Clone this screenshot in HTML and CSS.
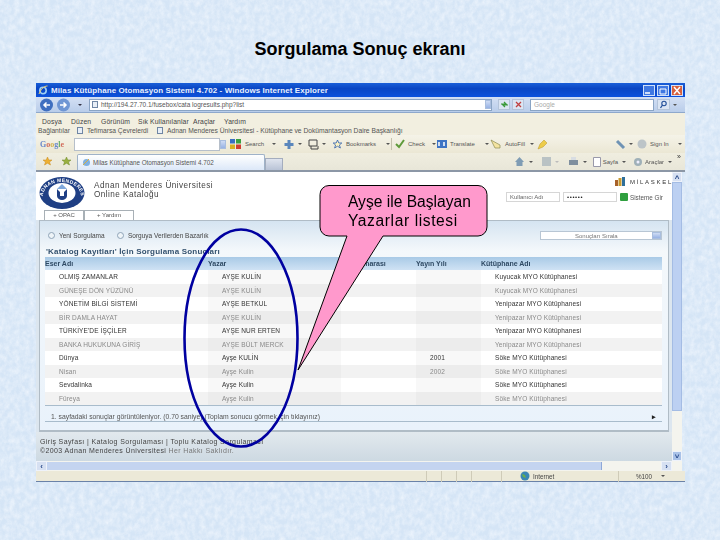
FILE: index.html
```html
<!DOCTYPE html>
<html lang="tr">
<head>
<meta charset="utf-8">
<title>Sorgulama Sonuç ekranı</title>
<link rel="stylesheet" href="styles.css">
</head>
<body>
<main class="slide">
<svg class="paper" width="720" height="540" aria-hidden="true">
  <filter id="fibre" x="0" y="0" width="100%" height="100%">
    <feTurbulence type="fractalNoise" baseFrequency="0.2 0.16" numOctaves="4" seed="4"/>
    <feColorMatrix type="matrix" values="0 0 0 0 .93  0 0 0 0 .96  0 0 0 0 1  1.5 0 0 0 -.45"/>
  </filter>
  <rect width="720" height="540" fill="#d5e5f6"/>
  <rect width="720" height="540" filter="url(#fibre)" opacity=".7"/>
</svg>

<h1 class="title">Sorgulama Sonuç ekranı</h1>

<section class="window">
  <header class="titlebar">
    <svg class="ie" width="10" height="10" viewBox="0 0 10 10"><circle cx="5" cy="5.500" r="3.200" fill="none" stroke="#9fd0f5" stroke-width="1.600"/><path d="M1 9C3 4 6 1 9.500 1" fill="none" stroke="#f2d070" stroke-width="1"/></svg>
    <span class="titletext">Milas Kütüphane Otomasyon Sistemi 4.702 - Windows Internet Explorer</span>
    <span class="winbtns">
      <i class="winbtn"><svg width="12" height="11"><path d="M2 8h5" stroke="#fff" stroke-width="1.500"/></svg></i>
      <i class="winbtn"><svg width="12" height="11"><path d="M3 4h6v5H3z" fill="none" stroke="#fff"/></svg></i>
      <i class="winbtn close"><svg width="12" height="11"><path d="M3 2l6 7M9 2l-6 7" stroke="#fff" stroke-width="1.500"/></svg></i>
    </span>
  </header>

  <div class="addressbar">
    <svg class="nav" width="34" height="14" viewBox="0 0 34 14"><circle cx="7.500" cy="7" r="6.500" fill="#3f6fc0"/><circle cx="24.500" cy="7" r="6.500" fill="#6f96d4"/><path d="M11 7H5M7.500 4.500L5 7l2.500 2.500M21 7h6M24.500 4.500L27 7l-2.500 2.500" fill="none" stroke="#fff" stroke-width="1.500"/></svg>
    <span class="caret"></span>
    <div class="urlbox"><i class="pageicon"></i><span>http://194.27.70.1/fusebox/cata logresults.php?list</span><b class="drop"></b></div>
    <span class="sqbtn"><svg width="9" height="9"><path d="M1 4h5l-2-2M8 5H3l2 2" fill="none" stroke="#3a9a3a" stroke-width="1.200"/></svg></span>
    <span class="sqbtn"><svg width="9" height="9"><path d="M2 2l5 5M7 2L2 7" stroke="#c04040" stroke-width="1.300"/></svg></span>
    <div class="searchbox">Google</div>
    <span class="sqbtn go"><svg width="9" height="9"><circle cx="5" cy="3.500" r="2.200" fill="none" stroke="#24509a" stroke-width="1.100"/><path d="M3.500 5L1.500 8" stroke="#24509a" stroke-width="1.300"/></svg></span>
    <i class="mini"></i>
  </div>

  <nav class="menubar">
    <span class="m1">Dosya</span><span class="m2">Düzen</span><span class="m3">Görünüm</span><span class="m4">Sık Kullanılanlar</span><span class="m5">Araçlar</span><span class="m6">Yardım</span>
  </nav>

  <div class="linksbar">
    <span class="l1">Bağlantılar</span><i class="pageicon"></i><span class="l2">Tefimarsa Çevrelerdi</span><i class="pageicon"></i><span>Adnan Menderes Üniversitesi - Kütüphane ve Dokümantasyon Daire Başkanlığı</span>
  </div>

  <div class="googlebar">
    <span class="glogo"><b class="gb">G</b><b class="gr">o</b><b class="gy">o</b><b class="gb">g</b><b class="gg">l</b><b class="gr">e</b></span>
    <span class="ginput"></span><b class="drop"></b>
    <svg class="i-search" width="12" height="10"><rect width="5" height="4.500" fill="#3a6fc0"/><rect x="6" width="5" height="4.500" fill="#3aa040"/><rect y="5.500" width="5" height="4.500" fill="#d8b020"/><rect x="6" y="5.500" width="5" height="4.500" fill="#d04030"/></svg>
    <span class="gitem w-search">Search</span><i class="mini"></i>
    <svg class="i-plus" width="12" height="11"><path d="M6 1v9M1.500 5.500h9" stroke="#5a86bc" stroke-width="3"/></svg><i class="mini"></i>
    <svg class="i-tabs" width="11" height="11"><path d="M1 1h8v6H1zM3 7v3h7V7" fill="none" stroke="#444"/></svg><i class="mini"></i>
    <svg class="i-star" width="11" height="10"><path d="M5.500 1l1.300 3h3l-2.400 2 1 3-2.900-1.800L2.600 9l1-3L1.200 4h3z" fill="#fdf3c0" stroke="#2f5fb0" stroke-width=".8"/></svg>
    <span class="gitem w-book">Bookmarks</span><i class="mini"></i>
    <span class="vsep"></span>
    <svg class="i-check" width="10" height="10"><path d="M1 5l3 3 5-7" fill="none" stroke="#5f9a3a" stroke-width="2"/></svg>
    <span class="gitem w-check">Check</span><i class="mini"></i>
    <svg class="i-trans" width="10" height="8"><rect width="10" height="8" fill="#3e74c4"/><path d="M2 6V2M7 6V2" stroke="#fff" stroke-width="1.500"/></svg>
    <span class="gitem w-trans">Translate</span><i class="mini"></i>
    <svg class="i-auto" width="12" height="10"><path d="M1 1l9 5v3H5z" fill="#f3e3a0" stroke="#8a8a50" stroke-width=".7"/></svg>
    <span class="gitem w-auto">AutoFill</span><i class="mini"></i>
    <svg class="i-pencil" width="11" height="11"><path d="M1 10l2-5 4-4 3 3-4 4z" fill="#edcc4a" stroke="#b8962a" stroke-width=".5"/></svg>
    <svg class="i-wrench" width="11" height="11"><path d="M2 2l7 7" stroke="#6f93b4" stroke-width="3"/></svg><i class="mini"></i>
    <svg class="i-sign" width="10" height="10"><circle cx="5" cy="5" r="4.500" fill="#bcc4c8"/></svg>
    <span class="gitem w-sign">Sign In</span><i class="mini"></i>
  </div>

  <div class="tabbar">
    <svg class="i-fav" width="11" height="10"><path d="M5.500 1l1.300 3h3.200L7.500 6l1 3-3-1.800L2.500 9l1-3L1 4h3.200z" fill="#eeb030" stroke="#c88a20" stroke-width=".5"/></svg>
    <svg class="i-fav2" width="11" height="10"><path d="M5.500 1l1.300 3h3.200L7.500 6l1 3-3-1.800L2.500 9l1-3L1 4h3.200z" fill="#9ab040" stroke="#6f8a28" stroke-width=".5"/></svg>
    <div class="tab"><svg width="9" height="9"><circle cx="4.500" cy="4.500" r="3.500" fill="#7fb0e0"/><path d="M1 7l6-6" stroke="#d8b040"/></svg><span>Milas Kütüphane Otomasyon Sistemi 4.702</span></div>
    <div class="newtab"></div>
    <div class="cmds">
      <svg width="11" height="11"><path d="M1 6l4.500-5L10 6H8.500v4h-6V6z" fill="#7f9cb4"/></svg><i class="mini"></i>
      <svg class="c-feed" width="9" height="9"><rect width="9" height="9" fill="#b9c2c4"/></svg><i class="mini pale"></i>
      <svg class="c-print" width="11" height="10"><rect x="1" y="3" width="9" height="5" fill="#7f8f9f"/><rect x="3" y="0" width="5" height="3" fill="#d8dde2"/></svg><i class="mini"></i>
      <svg class="c-page" width="8" height="10"><path d="M.5.500h7v9h-7z" fill="#fff" stroke="#99a"/></svg><span>Sayfa</span><i class="mini"></i>
      <svg class="c-tool" width="10" height="10"><circle cx="5" cy="5" r="4" fill="#9fb0b8"/><circle cx="5" cy="5" r="1.500" fill="#eef"/></svg><span>Araçlar</span><i class="mini"></i>
      <span class="more">»</span>
    </div>
  </div>

  <div class="viewport">
    <div class="viewrow">
      <div class="page">
        <div class="sitehead">
          <svg class="seal" width="46" height="34" viewBox="0 0 46 34"><ellipse cx="23" cy="17" rx="22.500" ry="16" fill="#1f3f84"/><ellipse cx="23" cy="17" rx="13.500" ry="10" fill="#fff"/><path d="M18 13v7a5 4 0 0 0 10 0v-7l-3 3v4h-4v-4z" fill="#1f3f84"/><path d="M23 8l5 5H18z" fill="#7fa8dc"/><path id="sealarc" d="M4 20A19 14 0 0 1 42 20" fill="none"/><text class="sealtext"><textPath href="#sealarc" startOffset="50%" text-anchor="middle">ADNAN MENDERES</textPath></text></svg>
          <div class="sitename">Adnan Menderes Üniversitesi<br>Online Kataloğu</div>
          <div class="loginblock">
            <div class="brand"><svg width="10" height="9"><rect y="3" width="3" height="6" fill="#a8622a"/><rect x="3.500" y="1" width="3" height="8" fill="#c89a30"/><rect x="7" width="3" height="9" fill="#2f6f9a"/></svg><span>MİLASKEL</span></div>
            <div class="loginrow">
              <span class="field">Kullanıcı Adı</span>
              <span class="field pass">••••••</span>
              <i class="gobtn"></i>
              <span class="enter">Sisteme Gir</span>
            </div>
          </div>
        </div>
        <div class="pagetabs"><span class="ptab t1">+ OPAC</span><span class="ptab t2">+ Yardım</span></div>
        <div class="panelwrap">
          <div class="panel">
            <div class="panelnav">
              <i class="bullet"></i><span class="nl1">Yeni Sorgulama</span>
              <i class="bullet"></i><span>Sorguya Verilerden Bazarlık</span>
              <div class="sortbox">Sonuçları Sırala<b class="drop"></b></div>
            </div>
            <h2 class="heading">'Katalog Kayıtları' İçin Sorgulama Sonuçları</h2>
            <table class="results">
              <colgroup><col class="c1"><col class="c2"><col class="c3"><col class="c4"><col class="c5"></colgroup>
              <thead><tr><th>Eser Adı</th><th>Yazar</th><th>Yer Numarası</th><th>Yayın Yılı</th><th>Kütüphane Adı</th></tr></thead>
              <tbody>
                <tr><td>OLMIŞ ZAMANLAR</td><td class="au">AYŞE KULİN</td><td></td><td class="yr"></td><td>Kuyucak MYO Kütüphanesi</td></tr>
                <tr><td>GÜNEŞE DÖN YÜZÜNÜ</td><td class="au">AYŞE KULİN</td><td></td><td class="yr"></td><td>Kuyucak MYO Kütüphanesi</td></tr>
                <tr><td>YÖNETİM BİLGİ SİSTEMİ</td><td class="au">AYŞE BETKUL</td><td></td><td class="yr"></td><td>Yenipazar MYO Kütüphanesi</td></tr>
                <tr><td>BİR DAMLA HAYAT</td><td class="au">AYŞE KULİN</td><td></td><td class="yr"></td><td>Yenipazar MYO Kütüphanesi</td></tr>
                <tr><td>TÜRKİYE'DE İŞÇİLER</td><td class="au">AYŞE NUR ERTEN</td><td></td><td class="yr"></td><td>Yenipazar MYO Kütüphanesi</td></tr>
                <tr><td>BANKA HUKUKUNA GİRİŞ</td><td class="au">AYŞE BÜLT MERCK</td><td></td><td class="yr"></td><td>Yenipazar MYO Kütüphanesi</td></tr>
                <tr><td>Dünya</td><td class="au">Ayşe KULİN</td><td></td><td class="yr">2001</td><td>Söke MYO Kütüphanesi</td></tr>
                <tr><td>Nisan</td><td class="au">Ayşe Kulin</td><td></td><td class="yr">2002</td><td>Söke MYO Kütüphanesi</td></tr>
                <tr><td>Sevdalinka</td><td class="au">Ayşe Kulin</td><td></td><td class="yr"></td><td>Söke MYO Kütüphanesi</td></tr>
                <tr><td>Füreya</td><td class="au">Ayşe Kulin</td><td></td><td class="yr"></td><td>Söke MYO Kütüphanesi</td></tr>
              </tbody>
            </table>
            <div class="pager"><span>1. sayfadaki sonuçlar görüntüleniyor. (0.70 saniye) (Toplam sonucu görmek için tıklayınız)</span><b>▸</b></div>
          </div>
        </div>
        <footer class="sitefoot">
          <p>Giriş Sayfası | Katalog Sorgulaması | Toplu Katalog Sorgulaması</p>
          <p class="copy"><strong>©2003 Adnan Menderes Üniversitesi</strong> Her Hakkı Saklıdır.</p>
        </footer>
      </div>
      <div class="vscroll"><i class="arrow">˄</i><span class="vthumb"></span><i class="arrow blue">˅</i></div>
    </div>
    <div class="hscroll"><i class="arrow">‹</i><span class="hthumb"></span><i class="arrow">›</i></div>
  </div>

  <footer class="statusbar">
    <span class="cell w1"></span><span class="cell w2"></span><span class="cell w2"></span><span class="cell w2"></span><span class="cell w3"></span>
    <svg class="globe" width="10" height="10"><circle cx="5" cy="5" r="4.500" fill="#3b87b4"/><path d="M2 3l3 1 1 3-3-1z" fill="#6ab04a"/></svg>
    <span class="zone">Internet</span>
    <span class="zoom">%100</span><i class="mini"></i>
  </footer>
</section>

<div class="callout">
  <svg class="calloutshape" width="200" height="195" viewBox="0 0 200 195"><path d="M35 1.500H158a9 9 0 0 1 9 9V43a9 9 0 0 1-9 9H63L-22 186 27 52H9a9 9 0 0 1-9-9V10.500a9 9 0 0 1 9-9z" transform="translate(24 0)" fill="#ff99cc" stroke="#000" stroke-width="1"/></svg>
  <p class="callouttext"><span class="cline">Ayşe ile Başlayan</span><span class="cline wide">Yazarlar listesi</span></p>
</div>
<svg class="ring" width="124" height="228" viewBox="0 0 124 228"><ellipse cx="62" cy="114" rx="56.500" ry="108.500" fill="none" stroke="#0000a0" stroke-width="2.600"/></svg>
</main>
</body>
</html>
```

FILE: styles.css
```css
* { box-sizing: border-box; }
html, body { margin: 0; padding: 0; }
body { width: 720px; height: 540px; overflow: hidden; font-family: "Liberation Sans", Arial, sans-serif; }
p, h1, h2 { margin: 0; }
i, b { font-style: normal; }
.slide { position: relative; width: 720px; height: 540px; padding-top: 38px; overflow: hidden; }
.paper { position: absolute; left: 0; top: 0; }
.title { position: relative; height: 45px; font-size: 18px; line-height: 22px; font-weight: 700; text-align: center; color: #000; }

.window { position: relative; width: 649px; height: 399px; margin-left: 36px; display: flex; flex-direction: column; font-size: 6.500px; color: #333; filter: blur(.45px); }

.titlebar { height: 14px; flex: none; display: flex; align-items: center; padding-left: 2px; background: linear-gradient(#1a5fd8, #0a46c4 40%, #0c52dc); color: #fff; }
.ie { flex: none; }
.titletext { margin-left: 3px; font-size: 8px; font-weight: 700; letter-spacing: .08px; color: #e8f0ff; }
.winbtns { margin-left: auto; display: flex; gap: 2px; padding-right: 2px; }
.winbtn { width: 12px; height: 11px; background: #3f78e2; border: 1px solid #cfe0fa; display: flex; }
.winbtn svg { margin: -1px; }
.winbtn.close { background: #d8603c; }

.addressbar { height: 16px; flex: none; display: flex; align-items: center; padding-left: 3px; background: linear-gradient(#d4e0f4, #b9cdea); border-bottom: 1px solid #8ea8cc; }
.nav { flex: none; }
.caret { width: 0; height: 0; margin: 0 7px 0 5px; border: 2.500px solid transparent; border-top-color: #334; border-bottom: 0; }
.urlbox { width: 403px; height: 12px; display: flex; align-items: center; padding-left: 2px; gap: 3px; background: #fff; border: 1px solid #8aa4c4; color: #555; }
.urlbox .drop { margin-left: auto; }
.pageicon { display: inline-block; flex: none; width: 6px; height: 7px; background: #e8eef6; border: 1px solid #6f86a4; }
.drop { flex: none; display: flex; width: 6px; height: 9px; background: linear-gradient(#cfdcf4, #97b2e4); border: 1px solid #a9bede; }
.sqbtn { flex: none; width: 12px; height: 11px; margin-left: 2px; display: flex; align-items: center; justify-content: center; background: #dbe5f3; border: 1px solid #b4c4da; }
.urlbox + .sqbtn { margin-left: 6px; }
.searchbox { width: 124px; height: 12px; margin-left: 6px; padding-left: 3px; line-height: 10px; color: #aaa; background: #fff; border: 1px solid #8aa4c4; }
.go { margin-left: 3px; width: 13px; }

.menubar { height: 13px; flex: none; display: flex; align-items: center; padding: 3px 0 0 6px; font-size: 6.800px; background: #f2efe0; color: #444; letter-spacing: .1px; }
.m1 { width: 29px; } .m2 { width: 30px; } .m3 { width: 37px; } .m4 { width: 55px; } .m5 { width: 31px; }

.linksbar { height: 9px; flex: none; display: flex; align-items: center; gap: 2px; padding-left: 2px; font-size: 6.700px; background: #f2efe0; color: #555; }
.l1 { width: 37px; } .l2 { width: 68px; }
.linksbar .pageicon { margin-right: 2px; }

.googlebar { height: 18px; flex: none; display: flex; align-items: center; font-size: 6px; background: linear-gradient(#f5f3e8, #ebe7d4); color: #555; padding-left: 4px; }
.glogo { width: 34px; font: 700 8px "Liberation Serif", serif; flex: none; opacity: .75; }
.gb { color: #3b66c4; } .gr { color: #c84030; } .gy { color: #c8a020; } .gg { color: #3a9a40; }
.ginput { width: 146px; height: 13px; background: #fff; border: 1px solid #b6bfca; flex: none; }
.gitem { margin-left: 3px; white-space: nowrap; flex: none; }
.mini { flex: none; display: inline-block; width: 0; height: 0; margin-left: 3px; border: 2px solid transparent; border-top-color: #555; border-bottom: 0; }
.mini.pale { border-top-color: #bbb; }
.i-search { margin-left: 4px; flex: none; }
.w-search { width: 24px; }
.i-plus { margin-left: 7px; flex: none; }
.i-tabs { margin-left: 6px; flex: none; }
.i-star { margin-left: 6px; flex: none; }
.w-book { width: 37px; }
.vsep { width: 1px; height: 12px; margin-left: 1px; background: #c4c0ac; }
.i-check { margin-left: 3px; flex: none; }
.w-check { width: 21px; }
.i-trans { margin-left: 1px; flex: none; }
.w-trans { width: 32px; }
.i-auto { margin-left: 1px; flex: none; }
.w-auto { width: 22px; }
.i-pencil { margin-left: 3px; flex: none; }
.i-wrench { margin-left: 67px; flex: none; }
.i-sign { margin-left: 4px; flex: none; }
.w-sign { width: 25px; }

.tabbar { height: 19px; flex: none; display: flex; align-items: flex-end; padding-left: 4px; background: linear-gradient(#f0eee0, #e8e6d8); border-bottom: 2px solid #8c97a6; color: #555; }
.i-fav { margin: 0 8px 4px 2px; flex: none; }
.i-fav2 { margin: 0 5px 4px 0; flex: none; }
.tab { width: 188px; height: 16px; display: flex; align-items: center; gap: 2px; padding-left: 4px; font-size: 6.300px; background: linear-gradient(#fff, #dce8f8); border: 1px solid #9fb2c8; border-bottom: 0; border-radius: 2px 2px 0 0; }
.newtab { width: 18px; height: 12px; background: linear-gradient(#dfe4ee, #b9c3d6); border: 1px solid #a4adbe; border-bottom: 0; }
.cmds { margin-left: auto; display: flex; align-items: center; height: 17px; padding-right: 4px; font-size: 6px; }
.cmds .mini { margin-left: 4px; }
.c-feed { margin-left: 9px; } .c-print { margin-left: 9px; } .c-page { margin-left: 6px; margin-right: 2px; } .c-tool { margin-left: 7px; margin-right: 2px; }
.more { margin-left: 5px; align-self: flex-start; font-size: 7px; color: #333; }

.viewport { flex: 1; min-height: 0; width: 646px; display: flex; flex-direction: column; }
.viewrow { flex: 1; min-height: 0; display: flex; background: #fff; }
.page { flex: 1; min-width: 0; display: flex; flex-direction: column; }
.sitehead { height: 38px; flex: none; display: flex; padding: 4px 0 0 3px; }
.seal { flex: none; }
.sealtext { font-size: 5px; font-weight: 700; letter-spacing: .3px; fill: #fff; }
.sitename { margin: 6px 0 0 9px; font-size: 8.200px; line-height: 8.500px; color: #444; letter-spacing: .45px; }
.loginblock { margin-left: auto; display: flex; flex-direction: column; align-items: flex-end; }
.brand { display: flex; align-items: center; gap: 5px; margin-top: 1px; height: 9px; }
.brand span { width: 42px; font-size: 6px; letter-spacing: 1.700px; color: #333; white-space: nowrap; }
.loginrow { display: flex; align-items: center; gap: 3px; margin-top: 6px; padding-right: 4px; }
.field { width: 54px; height: 10px; padding-left: 3px; line-height: 9px; border: 1px solid #d6d6d6; background: #fff; color: #666; font-size: 6px; }
.pass { color: #222; letter-spacing: .6px; }
.gobtn { width: 8px; height: 8px; background: #2f9f3f; border-radius: 1px; }
.enter { width: 38px; font-size: 6.300px; color: #555; margin-left: -1px; white-space: nowrap; }

.pagetabs { height: 10px; flex: none; display: flex; padding-left: 8px; font-size: 6px; color: #555; }
.ptab { height: 10px; line-height: 9px; border: 1px solid #a8b0b6; border-bottom: 0; background: #fff; text-align: center; }
.t1 { width: 40px; } .t2 { width: 50px; }

.panelwrap { flex: none; padding: 0 2px 0 3px; background: #dce6ef; }
.panel { width: 630px; height: 212px; display: flex; flex-direction: column; background: linear-gradient(#d5e4f1, #f4f8fb 30px, #e9f2fb); border: 1px solid #b0bcc6; border-bottom-width: 2px; padding: 0 6px 0 5px; color: #444; }
.panelnav { height: 22px; flex: none; display: flex; align-items: center; font-size: 6.500px; padding: 6px 0 0 3px; }
.bullet { width: 7px; height: 7px; margin-right: 4px; flex: none; border: 1px solid #8fa4b8; border-radius: 50%; background: #eef4f8; }
.nl1 { width: 58px; }
.sortbox { margin-left: auto; width: 122px; height: 9px; display: flex; padding-left: 34px; justify-content: space-between; line-height: 8px; font-size: 6px; background: #fff; border: 1px solid #b8c6d4; color: #777; }
.sortbox .drop { height: 7px; width: 9px; }
.heading { height: 14px; flex: none; padding: 4px 0 0 1px; font-size: 8px; line-height: 9px; font-weight: 700; letter-spacing: .2px; color: #33516e; }
.results { width: 617px; flex: none; table-layout: fixed; border-collapse: collapse; font-size: 6.500px; }
.c1 { width: 163px; } .c2 { width: 133px; } .c3 { width: 75px; } .c4 { width: 65px; } .c5 { width: 181px; }
.results th { height: 13px; padding: 0; text-align: left; font-size: 7px; color: #2f4a64; background: linear-gradient(#a9cae6, #cfe2f4); }
.results td { height: 13.500px; padding: 1px 0 0 14px; line-height: 8px; background: #fff; color: #333; letter-spacing: .12px; white-space: nowrap; overflow: hidden; }
.results tbody tr:nth-child(even) td { background: #f2f2f2; color: #8a8a8a; }
.results td.au, .results td.yr { background: #f8f8f8; }
.results tbody tr:nth-child(even) td.au, .results tbody tr:nth-child(even) td.yr { background: #ececec; }
.pager { width: 617px; height: 17px; flex: none; display: flex; justify-content: space-between; align-items: center; padding: 6px 6px 0; border-top: 1px solid #a8bccc; border-bottom: 1px solid #a8bccc; font-size: 6.800px; color: #555; }
.pager b { color: #222; }
.sitefoot { flex: 1; min-height: 0; padding: 5px 0 0 4px; background: linear-gradient(#e2e9ee, #cdd9e2); font-size: 7px; line-height: 9px; color: #444; letter-spacing: .38px; }
.copy { color: #777; }
.copy strong { font-weight: 400; color: #444; }
.hscroll { height: 10px; flex: none; display: flex; background: #f4f4ee; padding-right: 10px; }
.hthumb { flex: 1; margin: 1px 59px 1px 0; background: #c4d4f0; border-right: 1px solid #8fa8d8; }
.arrow { flex: none; width: 11px; height: 10px; line-height: 9px; text-align: center; font-size: 8px; font-weight: 700; color: #2a4a8a; background: #d6e0f2; border: 1px solid #eef2fa; }
.vscroll { width: 10px; flex: none; display: flex; flex-direction: column; background: #f4f4ee; }
.vthumb { flex: 1; background: #bcd0f2; border: 1px solid #a4bce4; margin-bottom: 40px; }
.vscroll .arrow { width: 10px; }
.vscroll .arrow.blue { background: #a9c2e8; }

.statusbar { height: 11px; flex: none; display: flex; align-items: center; font-size: 6.300px; background: #ece9d8; border-bottom: 1px solid #6a82a8; color: #444; }
.cell { height: 11px; border-right: 1px solid #cfcbb8; }
.w1 { width: 391px; } .w2 { width: 15px; } .w3 { width: 30px; }
.globe { margin-left: 18px; flex: none; }
.zone { width: 86px; height: 11px; line-height: 11px; margin-left: 3px; border-right: 1px solid #cfcbb8; }
.zoom { margin-left: 7px; width: 32px; padding-left: 10px; }

.callout { position: absolute; left: 296px; top: 184px; width: 192px; height: 190px; }
.calloutshape { position: absolute; left: 0; top: 0; overflow: visible; }
.callouttext { position: absolute; left: 52px; top: 8px; font-size: 15.600px; line-height: 19px; color: #000; white-space: nowrap; }
.cline { display: block; }
.wide { letter-spacing: .6px; }
.ring { position: absolute; left: 179px; top: 224px; }
```
